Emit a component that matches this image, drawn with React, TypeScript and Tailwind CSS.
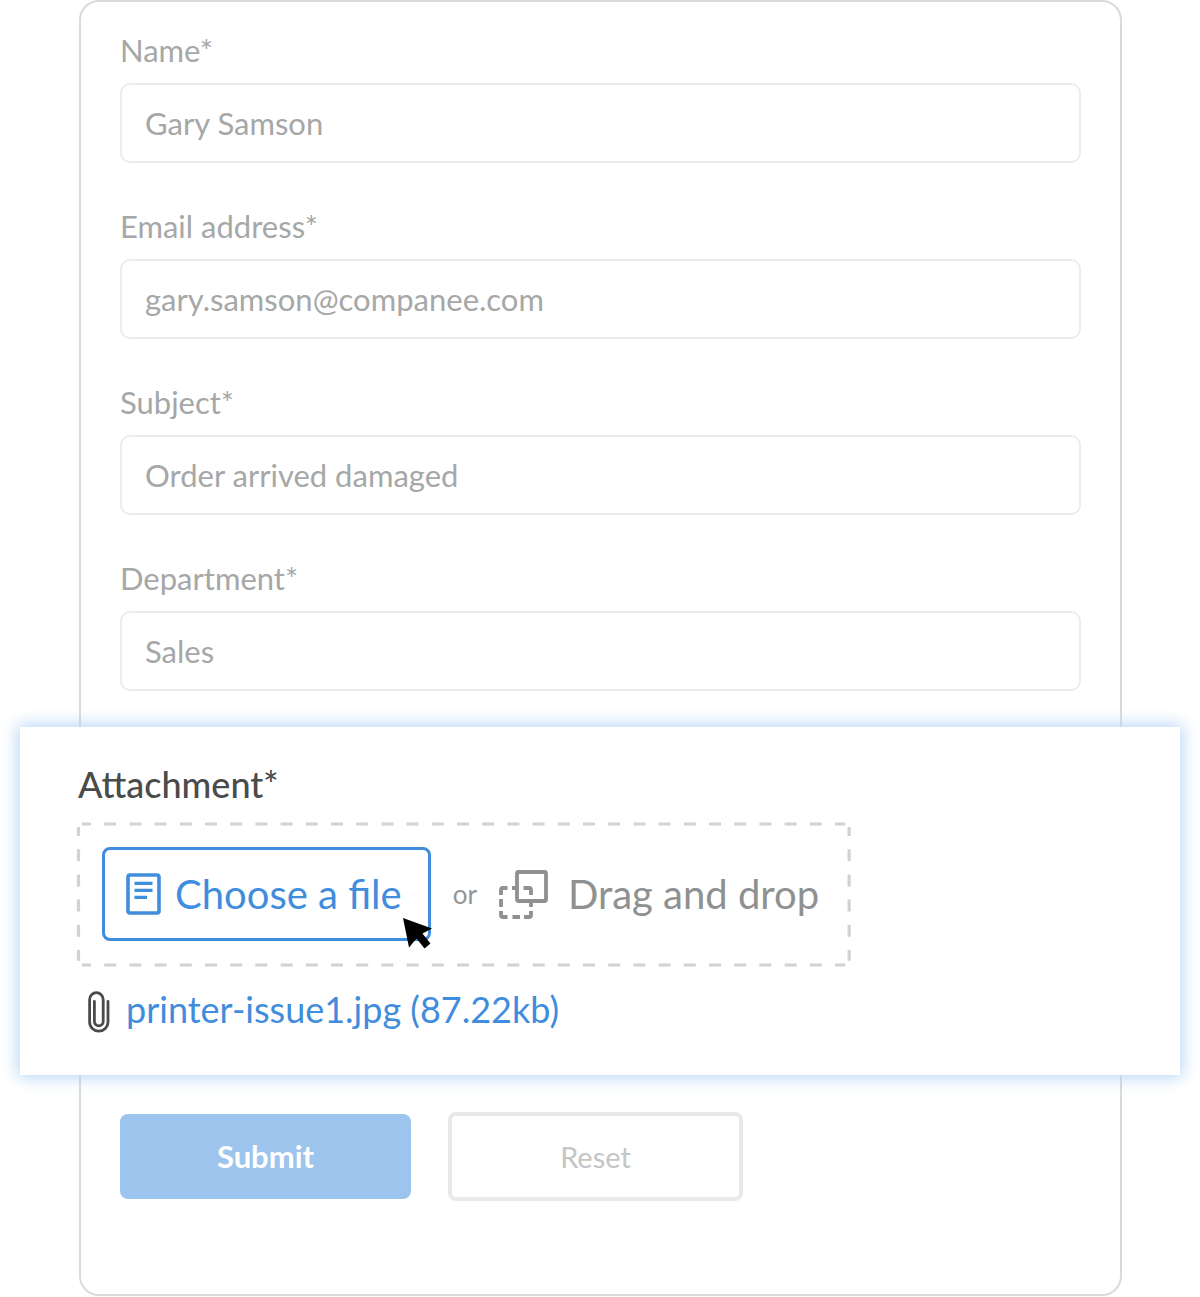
import { useState } from "react";

const fields = [
  { id: "name", label: "Name*", type: "text", value: "Gary Samson" },
  { id: "email", label: "Email address*", type: "email", value: "gary.samson@companee.com" },
  { id: "subject", label: "Subject*", type: "text", value: "Order arrived damaged" },
  { id: "department", label: "Department*", type: "text", value: "Sales" },
];

const initialValues: Record<string, string> = Object.fromEntries(fields.map((f) => [f.id, f.value]));

const FileIcon = () => (
  <svg width="35" height="42" viewBox="0 0 35 42" fill="none" stroke="currentColor" aria-hidden="true">
    <rect x="2" y="2" width="31" height="38" rx="2" strokeWidth="3.6" />
    <path d="M8.5 10.4h18M8.5 17.4h18M8.5 24.4h12.500" strokeWidth="3.4" />
  </svg>
);

const DragIcon = () => (
  <svg width="49" height="49" viewBox="0 0 49 49" fill="none" stroke="currentColor" strokeWidth="3.800" aria-hidden="true">
    <rect x="18" y="2" width="29" height="29" rx="1.5" />
    <path d="M2 25v-5q0-2 2-2H8.500M13 18h5M24.500 18h5.500q2 0 2 2V25M2 29v8M2 41v4q0 2 2 2H8.500M13.500 47h7.500M25 47h5q2 0 2-2V41M32 31v6" />
  </svg>
);

const ClipIcon = () => (
  <svg width="22" height="42" viewBox="0 0 22 42" fill="none" stroke="currentColor" strokeWidth="2.800" strokeLinecap="round" aria-hidden="true">
    <path d="M20 10.500V31a9.200 9.200 0 0 1-18.400 0V8.500a6.800 6.800 0 0 1 13.600 0V30.500a4.400 4.400 0 0 1-8.800 0V10.500" />
  </svg>
);

const CursorIcon = () => (
  <svg width="29" height="31" viewBox="0 0 29 31" fill="black" aria-hidden="true">
    <path d="M0 0L29 10.500L19.500 15.500L27.500 25.500L21.500 30.500L13.500 20.500L6 29.500Z" />
  </svg>
);

// CSS dashed borders are too tight here, so the edges are drawn as lines
const DashedFrame = () => (
  <svg className="pointer-events-none absolute inset-0 h-full w-full overflow-visible text-[#d2d2d2]" stroke="currentColor" strokeWidth="3.200" aria-hidden="true">
    <line x1="4" y1="1" x2="99.5%" y2="1" strokeDasharray="12 13.2" strokeDashoffset="3" />
    <line x1="4" y1="100%" x2="99.5%" y2="100%" strokeDasharray="12 13.2" strokeDashoffset="3" />
    <line x1="0.5" y1="4" x2="0.5" y2="97%" strokeDasharray="12 13.2" strokeDashoffset="3" />
    <line x1="100%" y1="4" x2="100%" y2="97%" strokeDasharray="12 13.2" strokeDashoffset="3" />
  </svg>
);

const App: React.FC = () => {
  const [values, setValues] = useState(initialValues);

  const handleChange = (id: string, val: string) => {
    setValues({ ...values, [id]: val });
  };

  return (
    <main className="bg-white pr-[78px] pl-[79px] font-['Lato',sans-serif]">
      <form
        className="rounded-[20px] border-2 border-[#d9dada] px-[39px] pt-[28px] pb-[93px]"
        onSubmit={(e) => e.preventDefault()}
      >
        <div className="flex flex-col gap-[43px]">
          {fields.map((f) => (
            <div key={f.id} className="flex flex-col gap-[13px]">
              <label htmlFor={f.id} className="text-[31px] leading-10 text-[#a6a7a7]">
                {f.label}
              </label>
              <input
                id={f.id}
                type={f.type}
                value={values[f.id]}
                onChange={(e) => handleChange(f.id, e.target.value)}
                className="h-20 w-full rounded-[10px] border-2 border-[#ececec] px-[23px] text-[31px] text-[#a6a7a7] outline-none focus:border-[#9cc4ec]"
              />
            </div>
          ))}
        </div>

        {/* Attachment panel, wider than the form */}
        <section className="relative -mr-[99px] -ml-[100px] mt-9 bg-white px-[58px] pt-[37px] pb-[42px] shadow-[0_0_16px_2px_#b5d5f5]">
          <h2 className="text-[36px] leading-10 font-medium text-[#4a4b4b]">Attachment*</h2>
          <div className="relative mt-[19px] inline-flex items-center py-6 pr-[30px] pl-6">
            <DashedFrame />
            <div className="relative">
              <button
                type="button"
                className="flex h-[94px] items-center gap-[14px] rounded-lg border-3 border-[#3f8ddc] pr-[26px] pl-[21px] text-[40px] text-[#3f8ddc]"
              >
                <FileIcon />
                Choose a file
              </button>
              <div className="absolute -right-px -bottom-2">
                <CursorIcon />
              </div>
            </div>
            <span className="ml-[22px] text-[26px] text-[#949595]">or</span>
            <div className="ml-[22px] flex items-center gap-5 text-[40px] text-[#8f9090]">
              <DragIcon />
              <span>Drag and drop</span>
            </div>
          </div>
          <div className="mt-[22px] flex items-end gap-4 pl-[10px] text-[#4a4b4b]">
            <ClipIcon />
            <a href="#printer-issue1" className="pb-0.5 text-[36px] leading-[44px] text-[#3f8ddc]">
              printer-issue1.jpg (87.22kb)
            </a>
          </div>
        </section>

        <div className="mt-[37px] flex items-center gap-[37px]">
          <button type="submit" className="h-[85px] w-[291px] rounded-lg bg-[#9cc4ec] text-[31px] font-bold text-white">
            Submit
          </button>
          <button type="reset" className="h-[89px] w-[295px] rounded-lg border-4 border-[#e9e9e9] text-[29px] text-[#c4c5c5]">
            Reset
          </button>
        </div>
      </form>
    </main>
  );
};

export default App;
